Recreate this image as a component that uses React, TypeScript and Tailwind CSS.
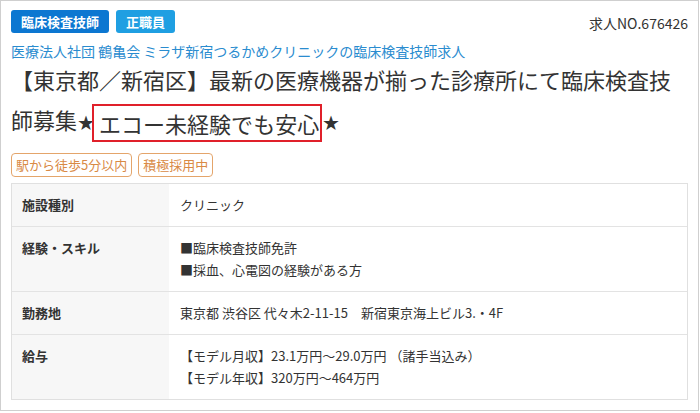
const FONT = "font-['Noto_Sans_CJK_JP','Noto_Sans',sans-serif]";

const rows: { label: string; lines: string[] }[] = [
  { label: "施設種別", lines: ["クリニック"] },
  { label: "経験・スキル", lines: ["■臨床検査技師免許", "■採血、心電図の経験がある方"] },
  { label: "勤務地", lines: ["東京都 渋谷区 代々木2-11-15　新宿東京海上ビル3.・4F"] },
  { label: "給与", lines: ["【モデル月収】23.1万円～29.0万円 （諸手当込み）", "【モデル年収】320万円～464万円"] },
];

function Star() {
  return (
    <span className="inline-block w-[15px] text-[20px] leading-[20px] font-['DejaVu_Sans',sans-serif] align-middle text-center">
      ★
    </span>
  );
}

export default function App() {
  return (
    <div className={`w-[700px] h-[413px] bg-white ${FONT}`}>
      <div className="w-[699px] h-[411px] border border-[#cfcfcf] px-[10px] pt-[9px] text-[#333]">
        {/* header */}
        <div className="flex h-[23px] items-center justify-between">
          <div className="flex gap-[7px]">
            <span className="h-[23px] px-[10px] rounded-[3px] bg-[#0c77d1] text-white text-[13px] font-bold leading-[23px]">
              臨床検査技師
            </span>
            <span className="h-[23px] px-[10px] rounded-[3px] bg-[#1f9fe2] text-white text-[13px] font-bold leading-[23px]">
              正職員
            </span>
          </div>
          <span className="text-[14px] leading-[20px] pt-[3px]">求人NO.676426</span>
        </div>

        <div className="mt-[10px] text-[14px] leading-[16px] text-[#2a8ccf]">
          医療法人社団 鶴亀会 ミラザ新宿つるかめクリニックの臨床検査技師求人
        </div>

        <h1 className="text-[22px] leading-[40px] font-normal">
          <span>【東京都／新宿区】最新の医療機器が揃った診療所にて臨床検査技</span>
          <br />
          <span>師募集</span>
          <Star />
          <span className="inline-flex items-center justify-between w-[230px] h-[38px] whitespace-nowrap border-2 border-[#e0202a] px-[5px] align-middle">
            {"エコー未経験でも安心".split("").map((c, i) => (
              <span key={i}>{c}</span>
            ))}
          </span>
          <Star />
        </h1>

        <div className="mt-[11px] flex gap-[6px]">
          <span className="h-[24px] px-[4px] rounded-[4px] border border-[#e4a56b] text-[#d98a45] text-[13px] leading-[22px]">
            駅から徒歩5分以内
          </span>
          <span className="h-[24px] px-[4px] rounded-[4px] border border-[#e4a56b] text-[#d98a45] text-[13px] leading-[22px]">
            積極採用中
          </span>
        </div>

        {/* table */}
        <div className="mt-[6px] border border-[#e0e0e0]">
          {rows.map((r, i) => (
            <div key={r.label} className={`flex ${i < rows.length - 1 ? "border-b border-[#e3e3e3]" : ""}`}>
              <div className="w-[157px] shrink-0 bg-[#f7f7f7] pl-[10px] pt-[10px] pb-[10px] text-[13px] font-bold leading-[22px]">
                {r.label}
              </div>
              <div className="flex-1 pl-[11px] pt-[10px] pb-[10px] text-[13px] leading-[22px]">
                {r.lines.map((l) => (
                  <div key={l}>{l}</div>
                ))}
              </div>
            </div>
          ))}
        </div>
      </div>
    </div>
  );
}
